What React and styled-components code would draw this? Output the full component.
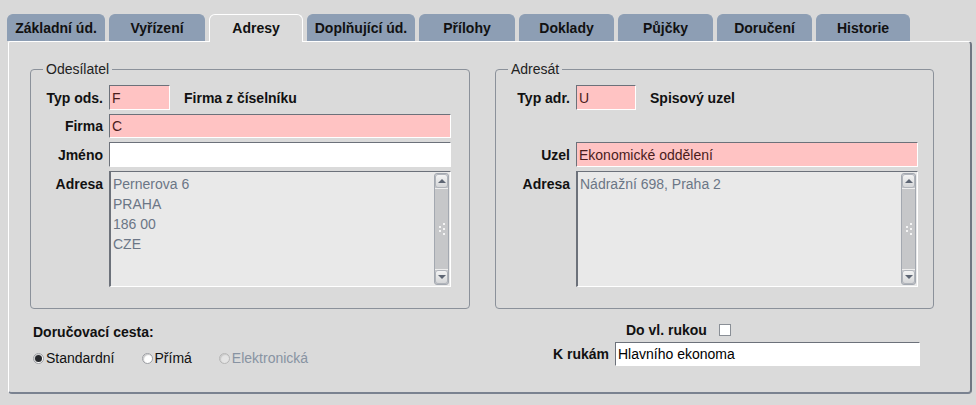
import React from 'react';
import styled, {createGlobalStyle} from 'styled-components';

const GlobalStyle = createGlobalStyle`
  body {
    margin: 0;
    background: #d9d9d9;
    font-family: "Liberation Sans", Arial, sans-serif;
    font-size: 14px;
    color: #111;
  }
`;

const Page = styled.div`
  width: 976px;
  height: 405px;
  padding-top: 14px;
  box-sizing: border-box;
  overflow: hidden;
`;

const TabBar = styled.div`
  display: flex;
  gap: 4px;
  margin-left: 7px;
  height: 27px;
`;

const Tab = styled.div`
  position: relative;
  z-index: ${p => (p.$active ? 2 : 0)};
  box-sizing: border-box;
  width: ${p => p.$w}px;
  height: ${p => (p.$active ? 28 : 27)}px;
  display: flex;
  align-items: center;
  justify-content: center;
  padding-bottom: ${p => (p.$active ? 1 : 0)}px;
  border-radius: 6px 6px 0 0;
  font-weight: 700;
  font-size: 14px;
  color: #111;
  background: ${p => (p.$active ? '#dadada' : '#8d9eb4')};
  border: 1px solid ${p => (p.$active ? '#ffffff' : '#8d9eb4')};
  border-bottom: none;
`;

const Panel = styled.div`
  position: relative;
  z-index: 1;
  box-sizing: border-box;
  margin-left: 8px;
  width: 964px;
  height: 353px;
  background: #dadada;
  border-top: 1px solid #ffffff;
  border-left: 1px solid #ffffff;
  border-right: 2px solid #6f7682;
  border-bottom: 2px solid #7a8290;
  border-radius: 2px 4px 4px 4px;
  padding: 19px 0 0 21px;
`;

const Columns = styled.div`
  display: grid;
  grid-template-columns: 440px 439px;
  column-gap: 25px;
`;

const Group = styled.fieldset`
  margin: 0;
  min-width: 0;
  padding: 8px 0 21px 0;
  border: 1px solid #8b919a;
  border-radius: 4px;
`;

const Legend = styled.legend`
  margin-left: 12px;
  padding: 0 3px;
  font-size: 14px;
  line-height: 16px;
  color: #222;
`;

const FieldGrid = styled.div`
  display: grid;
  grid-template-columns: ${p => p.$labelW}px 342px;
  grid-template-rows: 25px 24px 25px 116px;
  column-gap: 6px;
  row-gap: 4px;
  align-items: center;
`;

const Label = styled.div`
  grid-column: 1;
  grid-row: ${p => p.$row};
  align-self: ${p => (p.$top ? 'start' : 'center')};
  padding-top: ${p => (p.$top ? 5 : 0)}px;
  text-align: right;
  font-weight: 700;
  white-space: nowrap;
`;

const Cell = styled.div`
  grid-column: 2;
  grid-row: ${p => p.$row};
  display: flex;
  align-items: center;
  gap: 14px;
  height: 100%;
`;

const Field = styled.input`
  box-sizing: border-box;
  width: ${p => p.$w || '100%'};
  height: 100%;
  margin: 0;
  padding: 0 2px;
  border-style: solid;
  border-width: 1px;
  border-color: #6c717a #ffffff #ffffff #6c717a;
  background: ${p => (p.$required ? '#ffc3c3' : '#ffffff')};
  color: ${p => (p.$required ? '#4a1c1c' : '#000')};
  font: 14px "Liberation Sans", Arial, sans-serif;
  outline: none;
`;

const StaticText = styled.span`
  font-weight: 700;
  white-space: nowrap;
`;

const TextArea = styled.div`
  box-sizing: border-box;
  width: 100%;
  height: 100%;
  display: flex;
  border-style: solid;
  border-width: 1px 1px 1px 2px;
  border-color: #6c717a #ffffff #ffffff #6c717a;
  background: #e9e9e9;
`;

const AreaText = styled.div`
  flex: 1;
  padding: 2px 2px;
  line-height: 20px;
  color: #6b7686;
  white-space: pre-line;
`;

const ScrollBar = styled.div`
  box-sizing: border-box;
  width: 15px;
  margin: 1px;
  display: flex;
  flex-direction: column;
  background: #c6c7c9;
  border: 1px solid #a3a8b0;
  border-radius: 3px;
`;

const ScrollButton = styled.div`
  height: 14px;
  display: flex;
  align-items: center;
  justify-content: center;
  background: linear-gradient(#f6f6f6, #d3d4d6);
  border-radius: 3px;
  box-shadow: inset 0 0 0 1px #b0b4ba;

  &::after {
    content: '';
    border-left: 4px solid transparent;
    border-right: 4px solid transparent;
    ${p => (p.$down ? 'border-top: 4px solid #5e6674;' : 'border-bottom: 4px solid #5e6674;')}
  }
`;

const ScrollTrack = styled.div`
  flex: 1;
  display: flex;
  align-items: center;
  justify-content: center;
  border-top: 1px solid #eeeeee;
  border-bottom: 1px solid #eeeeee;
`;

const Grip = () => (
  <svg width="8" height="14" viewBox="0 0 8 14">
    {[[6, 1], [2, 4], [6, 6], [2, 8], [6, 11]].map(([x, y]) => (
      <rect key={`${x}-${y}`} x={x - 1} y={y} width="2" height="2" fill="#f4f4f4" />
    ))}
  </svg>
);

const AddressBox = ({children}) => (
  <TextArea>
    <AreaText>{children}</AreaText>
    <ScrollBar>
      <ScrollButton />
      <ScrollTrack><Grip /></ScrollTrack>
      <ScrollButton $down />
    </ScrollBar>
  </TextArea>
);

const BottomLeft = styled.div`
  padding: 15px 0 0 3px;
`;

const Heading = styled.div`
  font-weight: 700;
  line-height: 16px;
`;

const RadioRow = styled.div`
  display: flex;
  gap: 27px;
  margin-top: 10px;
  line-height: 16px;
`;

const RadioOption = styled.label`
  display: flex;
  align-items: center;
  gap: 2px;
  color: ${p => (p.$disabled ? '#8893a2' : '#111')};
`;

const RadioDot = styled.span`
  position: relative;
  box-sizing: border-box;
  width: 11px;
  height: 11px;
  border-radius: 50%;
  background: ${p => (p.$disabled ? '#e4e4e4' : '#ffffff')};
  border: 1px solid ${p => (p.$disabled ? '#b6b6b6' : '#9c9ea3')};
  box-shadow: inset 1px 1px 1px #c8c8c8;

  &::after {
    content: '';
    display: ${p => (p.$checked ? 'block' : 'none')};
    position: absolute;
    left: 1px;
    top: 1px;
    width: 7px;
    height: 7px;
    border-radius: 50%;
    background: #26282c;
  }
`;

const BottomRight = styled.div`
  padding-top: 13px;
  display: flex;
  flex-direction: column;
  gap: 4px;
`;

const CheckRow = styled.div`
  display: flex;
  align-items: center;
  gap: 12px;
  padding-left: 131px;
  line-height: 16px;
`;

const CheckBox = styled.span`
  box-sizing: border-box;
  width: 12px;
  height: 12px;
  background: #ffffff;
  border: 1px solid #8a8f96;
`;

const InputRow = styled.div`
  display: flex;
  align-items: center;
  gap: 6px;
  height: 24px;
`;

const RowLabel = styled.div`
  width: 114px;
  text-align: right;
  font-weight: 700;
`;

const tabs = [
  ['Základní úd.', 98],
  ['Vyřízení', 96],
  ['Adresy', 94],
  ['Doplňující úd.', 108],
  ['Přílohy', 96],
  ['Doklady', 95],
  ['Půjčky', 95],
  ['Doručení', 95],
  ['Historie', 94],
];

export default function App() {
  return (
    <Page>
      <GlobalStyle />
      <TabBar>
        {tabs.map(([name, w]) => (
          <Tab key={name} $w={w} $active={name === 'Adresy'}>{name}</Tab>
        ))}
      </TabBar>
      <Panel>
        <Columns>
          <Group>
            <Legend>Odesílatel</Legend>
            <FieldGrid $labelW={72}>
              <Label $row={1}>Typ ods.</Label>
              <Cell $row={1}>
                <Field $required $w="61px" readOnly value="F" />
                <StaticText>Firma z číselníku</StaticText>
              </Cell>
              <Label $row={2}>Firma</Label>
              <Cell $row={2}><Field $required readOnly value="C" /></Cell>
              <Label $row={3}>Jméno</Label>
              <Cell $row={3}><Field readOnly value="" /></Cell>
              <Label $row={4} $top>Adresa</Label>
              <Cell $row={4}>
                <AddressBox>{'Pernerova 6\nPRAHA\n186 00\nCZE'}</AddressBox>
              </Cell>
            </FieldGrid>
          </Group>
          <Group>
            <Legend>Adresát</Legend>
            <FieldGrid $labelW={74}>
              <Label $row={1}>Typ adr.</Label>
              <Cell $row={1}>
                <Field $required $w="60px" readOnly value="U" />
                <StaticText>Spisový uzel</StaticText>
              </Cell>
              <Label $row={3}>Uzel</Label>
              <Cell $row={3}><Field $required readOnly value="Ekonomické oddělení" /></Cell>
              <Label $row={4} $top>Adresa</Label>
              <Cell $row={4}>
                <AddressBox>Nádražní 698, Praha 2</AddressBox>
              </Cell>
            </FieldGrid>
          </Group>
          <BottomLeft>
            <Heading>Doručovací cesta:</Heading>
            <RadioRow>
              <RadioOption><RadioDot $checked />Standardní</RadioOption>
              <RadioOption><RadioDot />Přímá</RadioOption>
              <RadioOption $disabled><RadioDot $disabled />Elektronická</RadioOption>
            </RadioRow>
          </BottomLeft>
          <BottomRight>
            <CheckRow>
              <StaticText>Do vl. rukou</StaticText>
              <CheckBox />
            </CheckRow>
            <InputRow>
              <RowLabel>K rukám</RowLabel>
              <Field $w="305px" readOnly value="Hlavního ekonoma" />
            </InputRow>
          </BottomRight>
        </Columns>
      </Panel>
    </Page>
  );
}
